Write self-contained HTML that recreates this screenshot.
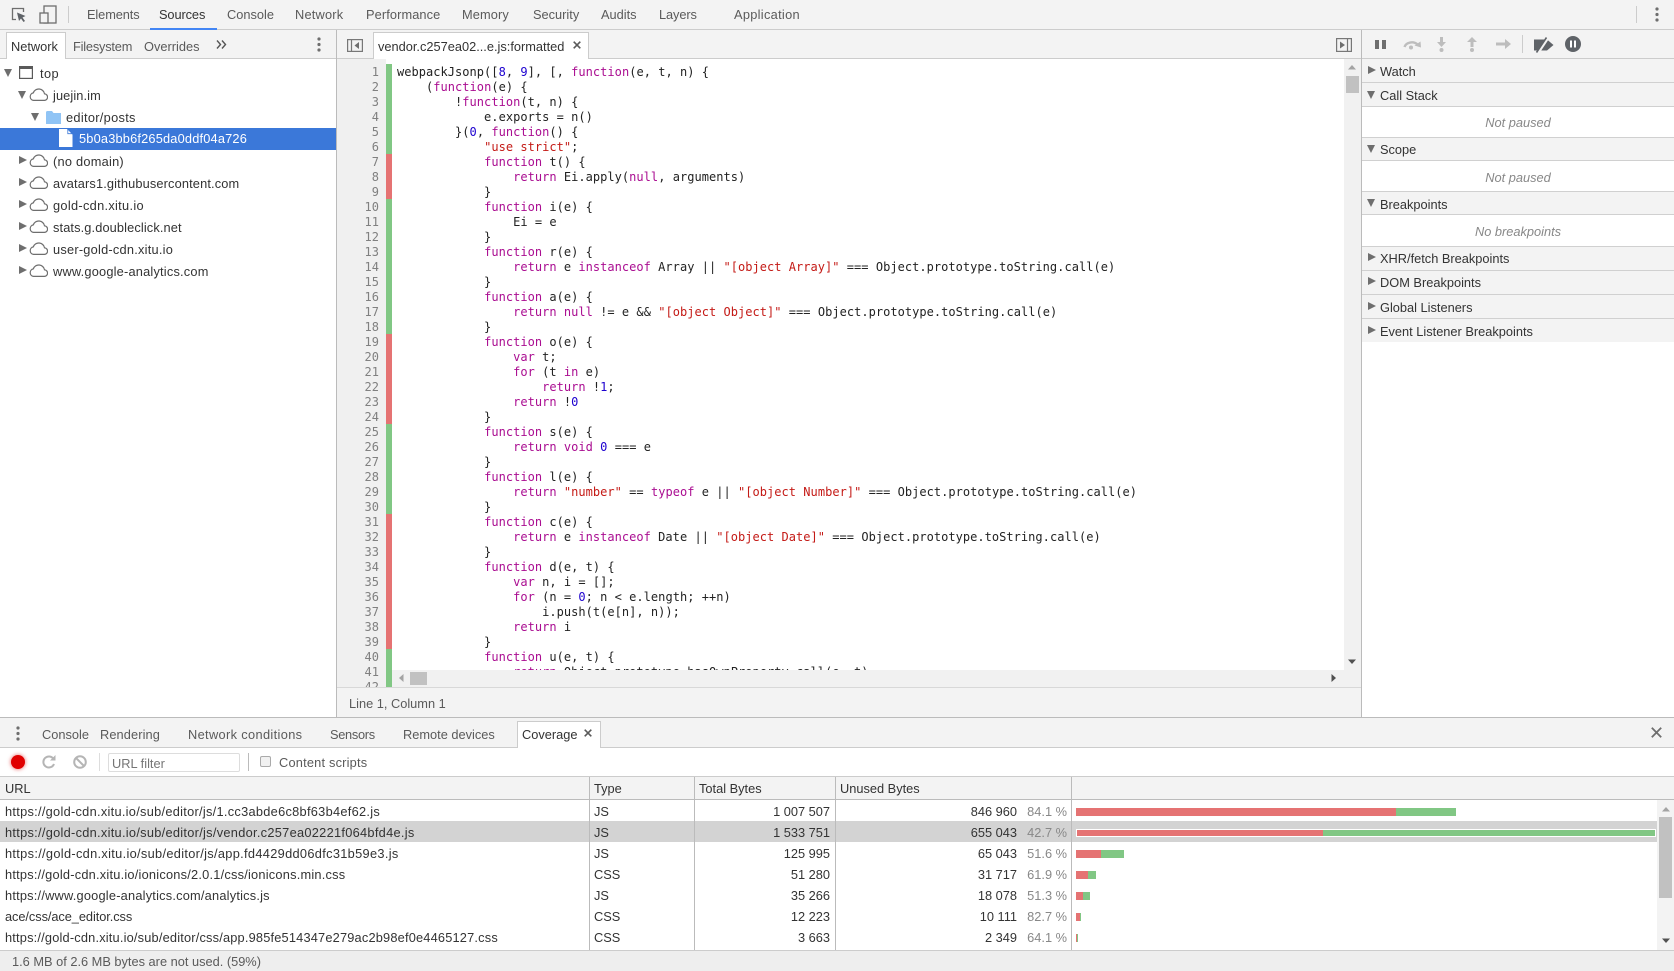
<!DOCTYPE html>
<html><head><meta charset="utf-8"><title>DevTools Coverage</title>
<style>
html,body{margin:0;padding:0;background:#fff}
#p{position:relative;width:1674px;height:971px;overflow:hidden;background:#fff;font:12.8px/16px "Liberation Sans",sans-serif;color:#333}
.a,.t{position:absolute}
.t{white-space:nowrap}
.g{color:#5a5a5a}
.d{width:0;height:0;position:absolute;border-left:4.5px solid transparent;border-right:4.5px solid transparent;border-top:8px solid #6e6e6e}
.r{width:0;height:0;position:absolute;border-top:4.5px solid transparent;border-bottom:4.5px solid transparent;border-left:8px solid #6e6e6e}
.h{position:absolute;left:1362px;width:312px;background:#f3f3f3;border-bottom:1px solid #d0d0d0}
.np{position:absolute;left:1362px;width:312px;text-align:center;font-style:italic;color:#888}
.n{position:absolute;text-align:right;white-space:nowrap}
.pc{color:#888}
.bar{position:absolute;height:8px}
.R{background:#e57373}.G{background:#81c784}
pre{margin:0;font:12px/15px "DejaVu Sans Mono",monospace;color:#222}
i{font-style:normal;color:#aa0d91}
b{font-weight:normal;color:#c41a16}
u{text-decoration:none;color:#1c00cf}
svg{position:absolute;overflow:visible}
</style></head><body><div id="p">
<svg width="0" height="0"><defs>
<symbol id="cloud" viewBox="0 0 19 13"><path d="M4.5 12.400H15A3.300 3.300 0 0 0 15.500 5.800A5.800 5.800 0 0 0 4.300 4.900A3.800 3.800 0 0 0 4.500 12.400Z" fill="none" stroke="#6e6e6e" stroke-width="1.200"/></symbol>
</defs></svg>

<!-- top toolbar -->
<div class="a" style="left:0;top:0;width:1674px;height:29px;background:#f3f3f3"></div>
<div class="a" style="left:0;top:29px;width:1674px;height:1px;background:#ccc"></div>
<svg style="left:11px;top:7px" width="16" height="16"><path d="M5 12.5H1.5V1.5H12.5V5" fill="none" stroke="#6e6e6e" stroke-width="1.3"/><path d="M6 5.5L14.5 9L11.5 10.5L14 14L12.5 15L10 11.5L8 14Z" fill="#5f6368"/></svg>
<svg style="left:39px;top:5px" width="18" height="19"><rect x="5" y="1" width="12" height="17" fill="none" stroke="#6e6e6e" stroke-width="1.3"/><rect x="1" y="8" width="8" height="10" fill="#f3f3f3" stroke="#6e6e6e" stroke-width="1.3"/></svg>
<div class="a" style="left:68px;top:6px;width:1px;height:17px;background:#ccc"></div>
<span class="t g" style="left:87px;top:7px;letter-spacing:-.1px">Elements</span>
<span class="t" style="left:159px;top:7px;letter-spacing:-.1px">Sources</span>
<div class="a" style="left:150px;top:28px;width:67px;height:2px;background:#4285f4"></div>
<span class="t g" style="left:227px;top:7px">Console</span>
<span class="t g" style="left:295px;top:7px;letter-spacing:.2px">Network</span>
<span class="t g" style="left:366px;top:7px;letter-spacing:.1px">Performance</span>
<span class="t g" style="left:462px;top:7px;letter-spacing:.1px">Memory</span>
<span class="t g" style="left:533px;top:7px">Security</span>
<span class="t g" style="left:601px;top:7px">Audits</span>
<span class="t g" style="left:659px;top:7px;letter-spacing:-.1px">Layers</span>
<span class="t g" style="left:734px;top:7px;letter-spacing:.3px">Application</span>
<div class="a" style="left:1636px;top:6px;width:1px;height:17px;background:#ccc"></div>
<svg style="left:1655px;top:7px" width="4" height="15"><circle cx="2" cy="2" r="1.6" fill="#6e6e6e"/><circle cx="2" cy="7.5" r="1.6" fill="#6e6e6e"/><circle cx="2" cy="13" r="1.6" fill="#6e6e6e"/></svg>

<!-- second row -->
<div class="a" style="left:0;top:30px;width:1361px;height:28px;background:#f3f3f3"></div>
<div class="a" style="left:0;top:58px;width:1674px;height:1px;background:#ccc"></div>
<div class="a" style="left:336px;top:30px;width:1px;height:688px;background:#bbb"></div>
<div class="a" style="left:1361px;top:30px;width:1px;height:688px;background:#bbb"></div>
<div class="a" style="left:6px;top:32px;width:60px;background:#fff;border:1px solid #ccc;border-bottom:0;box-sizing:border-box;height:27px"></div>
<span class="t" style="left:11px;top:39px">Network</span>
<span class="t g" style="left:73px;top:39px;letter-spacing:-.2px">Filesystem</span>
<span class="t g" style="left:144px;top:39px">Overrides</span>
<svg style="left:216px;top:40px" width="11" height="9"><path d="M1 .5L4.5 4.5L1 8.500M6 .5L9.500 4.500L6 8.500" fill="none" stroke="#555" stroke-width="1.4"/></svg>
<svg style="left:317px;top:37px" width="4" height="15"><circle cx="2" cy="2" r="1.6" fill="#6e6e6e"/><circle cx="2" cy="7.5" r="1.6" fill="#6e6e6e"/><circle cx="2" cy="13" r="1.6" fill="#6e6e6e"/></svg>

<!-- tree -->
<div class="d" style="left:4px;top:69px"></div>
<svg style="left:19px;top:66px" width="14" height="13"><rect x=".6" y=".6" width="12.800" height="11.800" fill="none" stroke="#5a5a5a" stroke-width="1.200"/><rect x="0" y="0" width="14" height="3" fill="#5a5a5a"/></svg>
<span class="t" style="left:40px;top:66px;letter-spacing:.4px">top</span>
<div class="d" style="left:18px;top:91px"></div>
<svg style="left:29px;top:88px" width="19" height="13"><use href="#cloud"/></svg>
<span class="t" style="left:53px;top:88px;letter-spacing:.1px">juejin.im</span>
<div class="d" style="left:31px;top:113px"></div>
<svg style="left:46px;top:111px" width="15" height="13"><path d="M0 1.500Q0 0 1.500 0H6L7.500 2H15V13H0Z" fill="#90c4f5"/></svg>
<span class="t" style="left:66px;top:110px;letter-spacing:.3px">editor/posts</span>
<div class="a" style="left:0;top:128px;width:336px;height:22px;background:#3b78d9"></div>
<svg style="left:59px;top:129px" width="14" height="18"><path d="M0 0H8L13.500 5.500V18H0Z" fill="#fff"/><path d="M8.800 0V4.700H13.500" fill="none" stroke="#3b78d9" stroke-width=".8"/></svg>
<span class="t" style="left:79px;top:131px;color:#fff;letter-spacing:.18px">5b0a3bb6f265da0ddf04a726</span>
<div class="r" style="left:19px;top:156px"></div>
<svg style="left:29px;top:154px" width="19" height="13"><use href="#cloud"/></svg>
<span class="t" style="left:53px;top:154px;letter-spacing:.24px">(no domain)</span>
<div class="r" style="left:19px;top:178px"></div>
<svg style="left:29px;top:176px" width="19" height="13"><use href="#cloud"/></svg>
<span class="t" style="left:53px;top:176px;letter-spacing:.14px">avatars1.githubusercontent.com</span>
<div class="r" style="left:19px;top:200px"></div>
<svg style="left:29px;top:198px" width="19" height="13"><use href="#cloud"/></svg>
<span class="t" style="left:53px;top:198px;letter-spacing:.3px">gold-cdn.xitu.io</span>
<div class="r" style="left:19px;top:222px"></div>
<svg style="left:29px;top:220px" width="19" height="13"><use href="#cloud"/></svg>
<span class="t" style="left:53px;top:220px;letter-spacing:.12px">stats.g.doubleclick.net</span>
<div class="r" style="left:19px;top:244px"></div>
<svg style="left:29px;top:242px" width="19" height="13"><use href="#cloud"/></svg>
<span class="t" style="left:53px;top:242px;letter-spacing:.23px">user-gold-cdn.xitu.io</span>
<div class="r" style="left:19px;top:266px"></div>
<svg style="left:29px;top:264px" width="19" height="13"><use href="#cloud"/></svg>
<span class="t" style="left:53px;top:264px;letter-spacing:.2px">www.google-analytics.com</span>

<!-- editor header -->
<svg style="left:347px;top:39px" width="16" height="13"><rect x=".6" y=".6" width="14.800" height="11.800" fill="none" stroke="#777" stroke-width="1.200"/><path d="M4.500 .5V12.500" stroke="#777" stroke-width="1.200"/><path d="M12 3L7.500 6.500L12 10Z" fill="#6e6e6e"/></svg>
<div class="a" style="left:373px;top:32px;width:216px;height:27px;background:#fff;border:1px solid #ccc;border-bottom:0;box-sizing:border-box"></div>
<span class="t" style="left:378px;top:39px">vendor.c257ea02...e.js:formatted</span>
<svg style="left:573px;top:41px" width="8" height="8"><path d="M.7 .7L7.300 7.300M7.300 .7L.7 7.300" stroke="#5a5a5a" stroke-width="1.600"/></svg>
<svg style="left:1336px;top:38px" width="16" height="14"><rect x=".6" y=".6" width="14.800" height="12.800" fill="none" stroke="#777" stroke-width="1.200"/><path d="M11.500 .5V13.500" stroke="#777" stroke-width="1.200"/><path d="M4 3.500L9 7L4 10.500Z" fill="#6e6e6e"/></svg>

<!-- editor body -->
<div class="a" style="left:337px;top:59px;width:49px;height:628px;background:#f0f0f0"></div>
<pre class="a" style="left:337px;top:65px;width:42px;height:622px;overflow:hidden;text-align:right;color:#808080">1
2
3
4
5
6
7
8
9
10
11
12
13
14
15
16
17
18
19
20
21
22
23
24
25
26
27
28
29
30
31
32
33
34
35
36
37
38
39
40
41
42</pre>
<div class="a G" style="left:386px;top:64px;width:6px;height:90px"></div>
<div class="a R" style="left:386px;top:154px;width:6px;height:45px"></div>
<div class="a G" style="left:386px;top:199px;width:6px;height:135px"></div>
<div class="a R" style="left:386px;top:334px;width:6px;height:90px"></div>
<div class="a G" style="left:386px;top:424px;width:6px;height:90px"></div>
<div class="a R" style="left:386px;top:514px;width:6px;height:135px"></div>
<div class="a G" style="left:386px;top:649px;width:6px;height:38px"></div>
<pre class="a" style="left:397px;top:65px;width:947px;height:605px;overflow:hidden;letter-spacing:.03px">webpackJsonp([<u>8</u>, <u>9</u>], [, <i>function</i>(e, t, n) {
    (<i>function</i>(e) {
        !<i>function</i>(t, n) {
            e.exports = n()
        }(<u>0</u>, <i>function</i>() {
            <b>"use strict"</b>;
            <i>function</i> t() {
                <i>return</i> Ei.apply(<i>null</i>, arguments)
            }
            <i>function</i> i(e) {
                Ei = e
            }
            <i>function</i> r(e) {
                <i>return</i> e <i>instanceof</i> Array || <b>"[object Array]"</b> === Object.prototype.toString.call(e)
            }
            <i>function</i> a(e) {
                <i>return</i> <i>null</i> != e &amp;&amp; <b>"[object Object]"</b> === Object.prototype.toString.call(e)
            }
            <i>function</i> o(e) {
                <i>var</i> t;
                <i>for</i> (t <i>in</i> e)
                    <i>return</i> !<u>1</u>;
                <i>return</i> !<u>0</u>
            }
            <i>function</i> s(e) {
                <i>return</i> <i>void</i> <u>0</u> === e
            }
            <i>function</i> l(e) {
                <i>return</i> <b>"number"</b> == <i>typeof</i> e || <b>"[object Number]"</b> === Object.prototype.toString.call(e)
            }
            <i>function</i> c(e) {
                <i>return</i> e <i>instanceof</i> Date || <b>"[object Date]"</b> === Object.prototype.toString.call(e)
            }
            <i>function</i> d(e, t) {
                <i>var</i> n, i = [];
                <i>for</i> (n = <u>0</u>; n &lt; e.length; ++n)
                    i.push(t(e[n], n));
                <i>return</i> i
            }
            <i>function</i> u(e, t) {
                <i>return</i> Object.prototype.hasOwnProperty.call(e, t)</pre>
<!-- editor scrollbars -->
<div class="a" style="left:1344px;top:59px;width:17px;height:628px;background:#f1f1f1"></div>
<svg style="left:1348px;top:65px" width="8" height="5"><path d="M4 0L8 4.500H0Z" fill="#a3a3a3"/></svg>
<div class="a" style="left:1346px;top:76px;width:13px;height:17px;background:#c1c1c1"></div>
<svg style="left:1348px;top:659px" width="8" height="5"><path d="M4 5L8 .5H0Z" fill="#505050"/></svg>
<div class="a" style="left:392px;top:670px;width:952px;height:17px;background:#f1f1f1"></div>
<svg style="left:399px;top:674px" width="5" height="8"><path d="M0 4L4.500 0V8Z" fill="#a3a3a3"/></svg>
<div class="a" style="left:410px;top:672px;width:17px;height:13px;background:#c1c1c1"></div>
<svg style="left:1331px;top:674px" width="5" height="8"><path d="M5 4L.5 0V8Z" fill="#505050"/></svg>
<!-- status -->
<div class="a" style="left:337px;top:687px;width:1024px;height:1px;background:#d8d8d8"></div>
<div class="a" style="left:337px;top:688px;width:1024px;height:29px;background:#f3f3f3"></div>
<span class="t g" style="left:349px;top:696px">Line 1, Column 1</span>

<!-- debugger toolbar -->
<div class="a" style="left:1362px;top:30px;width:312px;height:28px;background:#f3f3f3"></div>
<svg style="left:1375px;top:40px" width="11" height="9"><path d="M0 0H4V9H0ZM7 0H11V9H7Z" fill="#6e6e6e"/></svg>
<svg style="left:1402px;top:39px" width="20" height="11"><path d="M2.500 8A7.500 6 0 0 1 15.500 5.500" fill="none" stroke="#bdbdbd" stroke-width="2.400"/><path d="M12.500 6.500L19 8.500L18.500 2.500Z" fill="#bdbdbd"/><circle cx="9" cy="8.500" r="2" fill="#bdbdbd"/></svg>
<svg style="left:1437px;top:37px" width="9" height="15"><path d="M3 0H6V5H9L4.500 10L0 5H3Z" fill="#bdbdbd"/><circle cx="4.500" cy="13" r="2" fill="#bdbdbd"/></svg>
<svg style="left:1467px;top:37px" width="10" height="15"><path d="M3.500 10H6.500V5H10L5 0L0 5H3.500Z" fill="#bdbdbd"/><circle cx="5" cy="13" r="2" fill="#bdbdbd"/></svg>
<svg style="left:1496px;top:39px" width="15" height="10"><path d="M0 3.500H9V0L15 5L9 10V6.500H0Z" fill="#bdbdbd"/></svg>
<div class="a" style="left:1522px;top:35px;width:1px;height:18px;background:#ccc"></div>
<svg style="left:1534px;top:37px" width="20" height="16"><path d="M0 2.500H13L19.500 8L13 13.500H0Z" fill="#5f6368"/><path d="M4 15.500L14 .5" stroke="#f3f3f3" stroke-width="3.200"/><path d="M2.500 15.500L12.500 .5" stroke="#5f6368" stroke-width="1.600"/></svg>
<svg style="left:1565px;top:36px" width="16" height="16"><circle cx="8" cy="8" r="8" fill="#5f6368"/><path d="M5 4.500H7V11.500H5ZM9 4.500H11V11.500H9Z" fill="#fff"/></svg>

<!-- sidebar -->
<div class="h" style="top:59px;height:23px"></div><div class="r" style="left:1368px;top:66px"></div><span class="t" style="left:1380px;top:64px">Watch</span>
<div class="h" style="top:83px;height:23px"></div><div class="d" style="left:1367px;top:91px"></div><span class="t" style="left:1380px;top:88px">Call Stack</span>
<div class="np" style="top:115px">Not paused</div>
<div class="a" style="left:1362px;top:137px;width:312px;height:1px;background:#d0d0d0"></div>
<div class="h" style="top:138px;height:22px"></div><div class="d" style="left:1367px;top:145px"></div><span class="t" style="left:1380px;top:142px">Scope</span>
<div class="np" style="top:170px">Not paused</div>
<div class="a" style="left:1362px;top:191px;width:312px;height:1px;background:#d0d0d0"></div>
<div class="h" style="top:192px;height:22px"></div><div class="d" style="left:1367px;top:199px"></div><span class="t" style="left:1380px;top:197px">Breakpoints</span>
<div class="np" style="top:224px">No breakpoints</div>
<div class="a" style="left:1362px;top:246px;width:312px;height:1px;background:#d0d0d0"></div>
<div class="h" style="top:247px;height:23px"></div><div class="r" style="left:1368px;top:253px"></div><span class="t" style="left:1380px;top:251px">XHR/fetch Breakpoints</span>
<div class="h" style="top:271px;height:23px"></div><div class="r" style="left:1368px;top:277px"></div><span class="t" style="left:1380px;top:275px">DOM Breakpoints</span>
<div class="h" style="top:295px;height:23px"></div><div class="r" style="left:1368px;top:302px"></div><span class="t" style="left:1380px;top:300px">Global Listeners</span>
<div class="a" style="left:1362px;top:319px;width:312px;height:23px;background:#f3f3f3"></div><div class="r" style="left:1368px;top:326px"></div><span class="t" style="left:1380px;top:324px">Event Listener Breakpoints</span>

<!-- drawer tabs -->
<div class="a" style="left:0;top:717px;width:1674px;height:1px;background:#bbb"></div>
<div class="a" style="left:0;top:718px;width:1674px;height:29px;background:#f3f3f3"></div>
<div class="a" style="left:0;top:747px;width:1674px;height:1px;background:#ccc"></div>
<svg style="left:16px;top:726px" width="4" height="15"><circle cx="2" cy="2" r="1.600" fill="#6e6e6e"/><circle cx="2" cy="7.500" r="1.600" fill="#6e6e6e"/><circle cx="2" cy="13" r="1.600" fill="#6e6e6e"/></svg>
<span class="t g" style="left:42px;top:727px">Console</span>
<span class="t g" style="left:100px;top:727px;letter-spacing:.1px">Rendering</span>
<span class="t g" style="left:188px;top:727px;letter-spacing:.35px">Network conditions</span>
<span class="t g" style="left:330px;top:727px;letter-spacing:-.3px">Sensors</span>
<span class="t g" style="left:403px;top:727px">Remote devices</span>
<div class="a" style="left:517px;top:721px;width:84px;height:27px;background:#fff;border:1px solid #ccc;border-bottom:0;box-sizing:border-box"></div>
<span class="t" style="left:522px;top:727px">Coverage</span>
<svg style="left:584px;top:729px" width="8" height="8"><path d="M.7 .7L7.300 7.300M7.300 .7L.7 7.300" stroke="#5a5a5a" stroke-width="1.600"/></svg>
<svg style="left:1651px;top:727px" width="11" height="11"><path d="M.8 .8L10.200 10.200M10.200 .8L.8 10.200" stroke="#6e6e6e" stroke-width="1.800"/></svg>

<!-- coverage toolbar -->
<div class="a" style="left:11px;top:755px;width:14px;height:14px;border-radius:50%;background:#e00000;box-shadow:0 0 3px 1px rgba(230,60,60,.5)"></div>
<svg style="left:42px;top:755px" width="14" height="14"><path d="M11.500 4A5.500 5.500 0 1 0 12 9" fill="none" stroke="#b5b5b5" stroke-width="2"/><path d="M8 5.500H13.500V0Z" fill="#b5b5b5"/></svg>
<svg style="left:73px;top:755px" width="14" height="14"><circle cx="7" cy="7" r="5.800" fill="none" stroke="#b5b5b5" stroke-width="2"/><path d="M3 3L11 11" stroke="#b5b5b5" stroke-width="2"/></svg>
<div class="a" style="left:99px;top:753px;width:1px;height:18px;background:#ddd"></div>
<div class="a" style="left:108px;top:753px;width:132px;height:19px;border:1px solid #ddd;box-sizing:border-box;border-radius:2px"></div>
<span class="t" style="left:112px;top:756px;color:#757575">URL filter</span>
<div class="a" style="left:248px;top:753px;width:1px;height:18px;background:#bbb"></div>
<div class="a" style="left:260px;top:756px;width:11px;height:11px;background:#f1f1f1;border:1px solid #aaa;box-sizing:border-box;border-radius:2px"></div>
<span class="t g" style="left:279px;top:755px;letter-spacing:.2px">Content scripts</span>
<div class="a" style="left:0;top:776px;width:1674px;height:1px;background:#ccc"></div>

<!-- table -->
<div class="a" style="left:0;top:777px;width:1674px;height:22px;background:#f3f3f3"></div>
<div class="a" style="left:0;top:799px;width:1674px;height:1px;background:#bbb"></div>
<div class="a" style="left:0;top:821px;width:1657px;height:21px;background:#d3d3d3"></div>
<div class="a" style="left:589px;top:777px;width:1px;height:173px;background:#bbb"></div>
<div class="a" style="left:694px;top:777px;width:1px;height:173px;background:#bbb"></div>
<div class="a" style="left:835px;top:777px;width:1px;height:173px;background:#bbb"></div>
<div class="a" style="left:1071px;top:777px;width:1px;height:173px;background:#bbb"></div>
<span class="t" style="left:5px;top:781px">URL</span>
<span class="t" style="left:594px;top:781px">Type</span>
<span class="t" style="left:699px;top:781px">Total Bytes</span>
<span class="t" style="left:840px;top:781px">Unused Bytes</span>

<span class="t" style="left:5px;top:804px;letter-spacing:.28px">https://gold-cdn.xitu.io/sub/editor/js/1.cc3abde6c8bf63b4ef62.js</span>
<span class="t" style="left:594px;top:804px">JS</span>
<span class="n" style="right:844px;top:804px">1 007 507</span><span class="n" style="right:657px;top:804px">846 960</span><span class="n pc" style="right:607px;top:804px">84.1 %</span>
<span class="t" style="left:5px;top:825px;letter-spacing:.285px">https://gold-cdn.xitu.io/sub/editor/js/vendor.c257ea02221f064bfd4e.js</span>
<span class="t" style="left:594px;top:825px">JS</span>
<span class="n" style="right:844px;top:825px">1 533 751</span><span class="n" style="right:657px;top:825px">655 043</span><span class="n pc" style="right:607px;top:825px">42.7 %</span>
<span class="t" style="left:5px;top:846px;letter-spacing:.315px">https://gold-cdn.xitu.io/sub/editor/js/app.fd4429dd06dfc31b59e3.js</span>
<span class="t" style="left:594px;top:846px">JS</span>
<span class="n" style="right:844px;top:846px">125 995</span><span class="n" style="right:657px;top:846px">65 043</span><span class="n pc" style="right:607px;top:846px">51.6 %</span>
<span class="t" style="left:5px;top:867px;letter-spacing:.22px">https://gold-cdn.xitu.io/ionicons/2.0.1/css/ionicons.min.css</span>
<span class="t" style="left:594px;top:867px">CSS</span>
<span class="n" style="right:844px;top:867px">51 280</span><span class="n" style="right:657px;top:867px">31 717</span><span class="n pc" style="right:607px;top:867px">61.9 %</span>
<span class="t" style="left:5px;top:888px;letter-spacing:.21px">https://www.google-analytics.com/analytics.js</span>
<span class="t" style="left:594px;top:888px">JS</span>
<span class="n" style="right:844px;top:888px">35 266</span><span class="n" style="right:657px;top:888px">18 078</span><span class="n pc" style="right:607px;top:888px">51.3 %</span>
<span class="t" style="left:5px;top:909px;letter-spacing:-.07px">ace/css/ace_editor.css</span>
<span class="t" style="left:594px;top:909px">CSS</span>
<span class="n" style="right:844px;top:909px">12 223</span><span class="n" style="right:657px;top:909px">10 111</span><span class="n pc" style="right:607px;top:909px">82.7 %</span>
<span class="t" style="left:5px;top:930px;letter-spacing:.185px">https://gold-cdn.xitu.io/sub/editor/css/app.985fe514347e279ac2b98ef0e4465127.css</span>
<span class="t" style="left:594px;top:930px">CSS</span>
<span class="n" style="right:844px;top:930px">3 663</span><span class="n" style="right:657px;top:930px">2 349</span><span class="n pc" style="right:607px;top:930px">64.1 %</span>

<!-- bars -->
<div class="bar R" style="left:1076px;top:808px;width:320px"></div><div class="bar G" style="left:1396px;top:808px;width:60px"></div>
<div class="a" style="left:1076px;top:829px;width:580px;height:8px;background:#fff"></div>
<div class="a R" style="left:1077px;top:830px;width:246px;height:6px"></div><div class="a G" style="left:1323px;top:830px;width:332px;height:6px"></div>
<div class="bar R" style="left:1076px;top:850px;width:25px"></div><div class="bar G" style="left:1101px;top:850px;width:23px"></div>
<div class="bar R" style="left:1076px;top:871px;width:12px"></div><div class="bar G" style="left:1088px;top:871px;width:8px"></div>
<div class="bar R" style="left:1076px;top:892px;width:7px"></div><div class="bar G" style="left:1083px;top:892px;width:7px"></div>
<div class="bar R" style="left:1076px;top:913px;width:4px"></div><div class="bar G" style="left:1080px;top:913px;width:1px"></div>
<div class="bar R" style="left:1076px;top:934px;width:1px"></div><div class="bar G" style="left:1077px;top:934px;width:1px"></div>

<!-- table scrollbar -->
<div class="a" style="left:1657px;top:800px;width:17px;height:150px;background:#f3f3f3"></div>
<svg style="left:1662px;top:807px" width="8" height="5"><path d="M4 0L8 4.500H0Z" fill="#a3a3a3"/></svg>
<div class="a" style="left:1659px;top:817px;width:13px;height:81px;background:#c1c1c1"></div>
<svg style="left:1662px;top:938px" width="8" height="5"><path d="M4 5L8 .5H0Z" fill="#505050"/></svg>

<!-- footer -->
<div class="a" style="left:0;top:950px;width:1674px;height:1px;background:#ccc"></div>
<div class="a" style="left:0;top:951px;width:1674px;height:20px;background:#eee"></div>
<span class="t g" style="left:12px;top:954px">1.6 MB of 2.6 MB bytes are not used. (59%)</span>
</div></body></html>
